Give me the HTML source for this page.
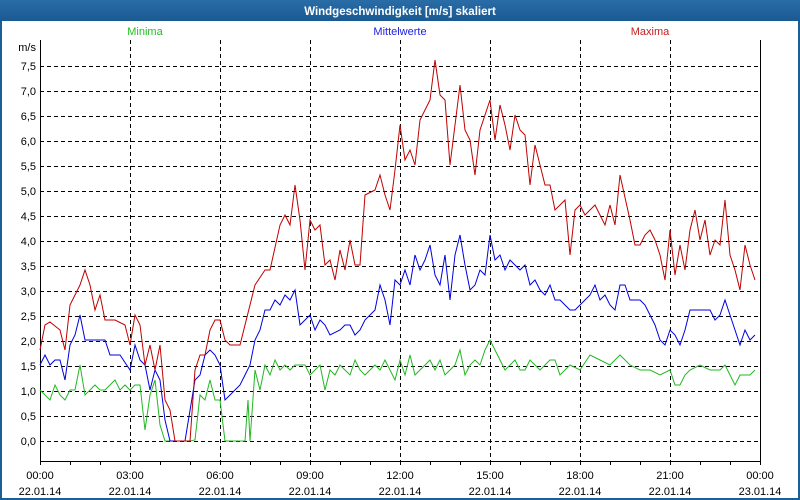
<!DOCTYPE html>
<html><head><meta charset="utf-8"><style>
html,body{margin:0;padding:0;width:800px;height:500px;overflow:hidden;background:#fff}
svg{display:block}
text{font-family:"Liberation Sans",sans-serif;font-size:11px}
</style></head><body>
<svg width="800" height="500" xmlns="http://www.w3.org/2000/svg">
<defs><linearGradient id="tb" x1="0" y1="0" x2="0" y2="1"><stop offset="0" stop-color="#2a6ca6"/><stop offset="1" stop-color="#1a5a93"/></linearGradient></defs>
<rect x="0" y="0" width="800" height="500" fill="#1c5e96"/>
<rect x="0" y="0" width="800" height="21" fill="url(#tb)"/>
<rect x="2" y="21" width="796" height="477" fill="#fff"/>
<text x="400" y="15" fill="#fff" font-weight="bold" text-anchor="middle" style="font-size:11.5px">Windgeschwindigkeit [m/s] skaliert</text>
<text x="145" y="35" fill="#22c022" text-anchor="middle">Minima</text>
<text x="400" y="35" fill="#2020e0" text-anchor="middle">Mittelwerte</text>
<text x="650" y="35" fill="#c02020" text-anchor="middle">Maxima</text>
<text x="36" y="51" text-anchor="end">m/s</text>
<g stroke="#000" stroke-width="1" stroke-dasharray="4,3" fill="none">
<path d="M40 66.5H760M40 91.5H760M40 116.5H760M40 141.5H760M40 166.5H760M40 191.5H760M40 216.5H760M40 241.5H760M40 266.5H760M40 291.5H760M40 316.5H760M40 341.5H760M40 366.5H760M40 391.5H760M40 416.5H760M40 441.5H760"/>
<path d="M130.5 40V461M220.5 40V461M310.5 40V461M400.5 40V461M490.5 40V461M580.5 40V461M670.5 40V461"/>
</g>
<path d="M40.5 40V461.5H760.5V40" stroke="#000" fill="none"/>
<g stroke="#000"><path d="M70.5 461v4M100.5 461v4M130.5 461v4M160.5 461v4M190.5 461v4M220.5 461v4M250.5 461v4M280.5 461v4M310.5 461v4M340.5 461v4M370.5 461v4M400.5 461v4M430.5 461v4M460.5 461v4M490.5 461v4M520.5 461v4M550.5 461v4M580.5 461v4M610.5 461v4M640.5 461v4M670.5 461v4M700.5 461v4M730.5 461v4M760.5 461v4M40.5 461v4"/></g>
<g text-anchor="end">
<text x="36" y="70">7,5</text><text x="36" y="95">7,0</text><text x="36" y="120">6,5</text><text x="36" y="145">6,0</text><text x="36" y="170">5,5</text><text x="36" y="195">5,0</text><text x="36" y="220">4,5</text><text x="36" y="245">4,0</text><text x="36" y="270">3,5</text><text x="36" y="295">3,0</text><text x="36" y="320">2,5</text><text x="36" y="345">2,0</text><text x="36" y="370">1,5</text><text x="36" y="395">1,0</text><text x="36" y="420">0,5</text><text x="36" y="445">0,0</text>
</g>
<g text-anchor="middle">
<text x="40" y="479">00:00</text><text x="40" y="495">22.01.14</text>
<text x="130" y="479">03:00</text><text x="130" y="495">22.01.14</text>
<text x="220" y="479">06:00</text><text x="220" y="495">22.01.14</text>
<text x="310" y="479">09:00</text><text x="310" y="495">22.01.14</text>
<text x="400" y="479">12:00</text><text x="400" y="495">22.01.14</text>
<text x="490" y="479">15:00</text><text x="490" y="495">22.01.14</text>
<text x="580" y="479">18:00</text><text x="580" y="495">22.01.14</text>
<text x="670" y="479">21:00</text><text x="670" y="495">22.01.14</text>
<text x="760" y="479">00:00</text><text x="760" y="495">23.01.14</text>
</g>
<polyline fill="none" stroke="#22b822" points="40,390 45,395 50,400 55,385 60,395 65,400 70,390 75,390 80,365 85,395 90,390 95,385 100,390 105,390 110,385 115,380 120,390 125,385 130,390 135,385 140,385 145,430 150,395 155,380 160,425 165,441 190,441 195,440 200,395 205,400 210,380 215,400 220,400 225,441 245,441 248,400 250,441 255,370 260,390 265,365 270,375 275,360 280,370 285,365 290,370 295,365 305,365 310,375 315,370 320,365 325,390 330,370 335,375 340,365 345,370 350,375 355,360 360,370 365,375 370,370 375,365 380,370 385,360 390,370 395,380 400,360 405,375 410,355 415,375 420,370 425,365 430,360 435,370 440,360 445,375 450,370 455,365 460,350 465,375 470,365 475,360 480,365 485,350 490,340 495,350 500,360 505,370 510,365 515,360 520,370 525,370 530,360 535,365 540,370 545,365 550,360 555,360 560,375 565,370 570,365 580,370 590,355 600,360 610,365 620,355 630,365 640,370 650,370 660,375 670,370 675,385 680,385 685,375 690,370 700,365 710,370 720,370 725,365 730,375 735,385 740,375 750,375 755,370"/>
<polyline fill="none" stroke="#0000e0" points="40,365 45,355 50,365 55,360 60,360 65,380 70,345 75,335 80,315 85,340 105,340 110,355 120,355 130,370 135,345 140,360 145,365 150,390 155,370 160,380 165,420 170,441 185,441 195,380 200,375 205,355 210,350 215,355 220,365 225,400 230,395 240,385 245,375 250,365 255,340 260,330 265,310 270,310 275,300 280,305 285,295 290,300 295,290 300,325 305,320 310,315 315,330 320,320 325,325 330,335 340,330 345,325 350,325 355,335 360,330 365,320 375,310 380,285 385,300 390,325 395,280 400,285 405,270 410,285 415,255 420,270 425,260 430,245 435,275 440,285 445,255 450,300 455,255 460,235 465,265 470,290 475,285 480,270 485,275 490,235 495,260 500,255 505,270 510,260 515,265 520,270 525,265 530,285 535,280 540,290 545,295 550,285 555,300 560,300 570,310 575,310 580,305 585,300 590,295 595,285 600,300 605,295 610,305 615,310 620,285 625,285 630,300 640,300 645,305 650,315 655,325 660,340 665,345 670,330 675,335 680,345 685,330 690,310 710,310 715,320 720,315 725,300 730,315 735,330 740,345 745,330 750,340 755,335"/>
<polyline fill="none" stroke="#c00000" points="40,350 45,325 50,322 60,330 65,350 70,305 80,285 85,270 90,285 95,310 100,295 105,320 115,320 125,325 130,345 135,315 140,325 145,365 150,345 155,370 160,345 165,400 170,410 175,441 190,441 195,370 200,355 205,355 210,330 215,320 220,320 225,340 230,345 240,345 245,325 255,285 265,270 270,270 280,225 285,215 290,225 295,185 300,220 305,270 310,220 315,230 320,225 325,265 330,260 335,280 340,250 345,270 350,240 355,265 360,265 365,195 375,190 380,175 385,195 390,210 395,170 400,125 405,160 410,150 415,165 420,120 425,110 430,100 435,60 440,95 445,100 450,165 455,125 460,85 465,130 470,140 475,175 480,130 485,115 490,100 495,140 500,105 505,125 510,150 515,115 520,130 525,135 530,185 535,145 540,165 545,185 550,185 555,210 565,200 570,255 575,210 580,205 585,215 590,210 595,205 600,215 605,225 610,205 615,225 620,175 630,220 635,245 640,245 645,235 650,230 655,240 660,255 665,280 670,230 675,275 680,245 685,270 690,230 695,210 700,240 705,220 710,255 715,240 720,245 725,200 730,255 735,270 740,290 745,245 750,265 755,280"/>
</svg>
</body></html>
